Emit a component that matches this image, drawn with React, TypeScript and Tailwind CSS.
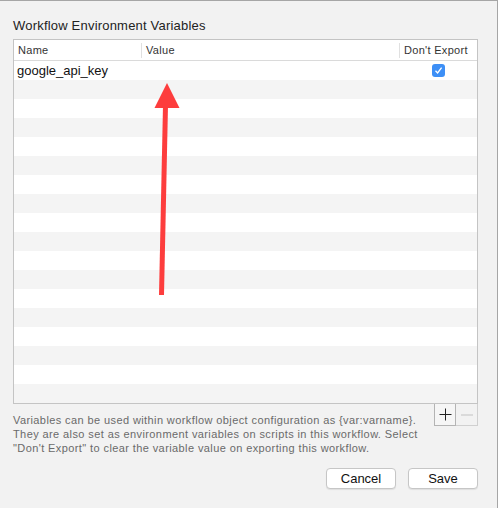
const rows = Array.from({ length: 18 }, (_, i) => i)

export default function App() {
  return (
    <div
      className="relative w-[498px] h-[508px] bg-[#f2f2f2] border-t border-r border-[#a6a6a6] overflow-hidden"
      style={{ fontFamily: '"Liberation Sans", Arial, sans-serif' }}
    >
      <div className="pl-[13px] pr-[19px]">
        {/* TITLE */}
        <div className="h-[38px] pt-[16px] text-[13px] leading-[18px] tracking-[0.2px] text-[#222]">
          Workflow Environment Variables
        </div>

        {/* TABLE */}
        <div className="border border-[#c4c4c4] bg-white">
          <div className="flex h-[21px] items-center border-b border-[#dadada] text-[11px] tracking-[0.3px] text-[#333]">
            <div className="w-[127px] pl-[4px]">Name</div>
            <div className="h-[15px] w-px bg-[#e0e0e0]" />
            <div className="flex-1 pl-[4px]">Value</div>
            <div className="h-[15px] w-px bg-[#e0e0e0]" />
            <div className="w-[77px] pl-[4px]">Don't Export</div>
          </div>
          <div className="h-[342px] overflow-hidden">
            {rows.map(i => (
              <div
                key={i}
                className={`flex h-[19px] items-center ${i % 2 === 0 ? "bg-white" : "bg-[#f4f4f4]"}`}
              >
                {i === 0 && (
                  <>
                    <div className="w-[128px] pl-[3px] text-[13px] text-[#111]">google_api_key</div>
                    <div className="flex-1" />
                    <div className="flex w-[77px] justify-center">
                      <div className="flex h-[13px] w-[13px] items-center justify-center rounded-[3px] bg-[#3d8ff6]">
                        <svg width="9" height="9" viewBox="0 0 9 9">
                          <path d="M1.5 4.8 L3.6 7 L7.6 1.6" fill="none" stroke="white" strokeWidth="1.3" />
                        </svg>
                      </div>
                    </div>
                  </>
                )}
              </div>
            ))}
          </div>
        </div>

        {/* HELP + ADD/REMOVE */}
        <div className="flex">
          <div className="flex-1 pt-[9px] text-[11px] leading-[14px] tracking-[0.4px] text-[#6a6a6a]">
            Variables can be used within workflow object configuration as {"{var:varname}"}.
            <br />
            They are also set as environment variables on scripts in this workflow. Select
            <br />
            "Don't Export" to clear the variable value on exporting this workflow.
          </div>
          <div className="flex h-[22px]">
            <div className="flex w-[22px] items-center justify-center border border-t-0 border-[#b4b4b4] bg-[#f6f6f6]">
              <svg width="13" height="13" viewBox="0 0 13 13">
                <path d="M6.5 0.5 V12.5 M0.5 6.5 H12.5" stroke="#222" strokeWidth="1" />
              </svg>
            </div>
            <div className="flex w-[22px] items-center justify-center border border-l-0 border-t-0 border-[#d0d0d0] bg-[#f2f2f2]">
              <svg width="12" height="2" viewBox="0 0 12 2">
                <path d="M0 1 H12" stroke="#c2c2c2" strokeWidth="1" />
              </svg>
            </div>
          </div>
        </div>

        {/* BUTTONS */}
        <div className="mt-[13px] flex justify-end gap-[12px]">
          <button className="h-[21px] w-[70px] rounded-[4px] border border-[#c6c6c6] bg-white text-[13px] leading-[19px] text-[#111] shadow-[0_1px_1px_rgba(0,0,0,0.08)]">
            Cancel
          </button>
          <button className="h-[21px] w-[70px] rounded-[4px] border border-[#c6c6c6] bg-white text-[13px] leading-[19px] text-[#111] shadow-[0_1px_1px_rgba(0,0,0,0.08)]">
            Save
          </button>
        </div>
      </div>

      {/* ANNOTATION ARROW */}
      <svg className="absolute left-0 top-0" width="498" height="508" viewBox="0 0 498 508">
        <path d="M161.5 294 L165.5 104" stroke="#fd3d3d" strokeWidth="5" strokeLinecap="butt" />
        <path d="M167 82 L179.5 107 L154.5 107 Z" fill="#fd3d3d" />
      </svg>
    </div>
  )
}
